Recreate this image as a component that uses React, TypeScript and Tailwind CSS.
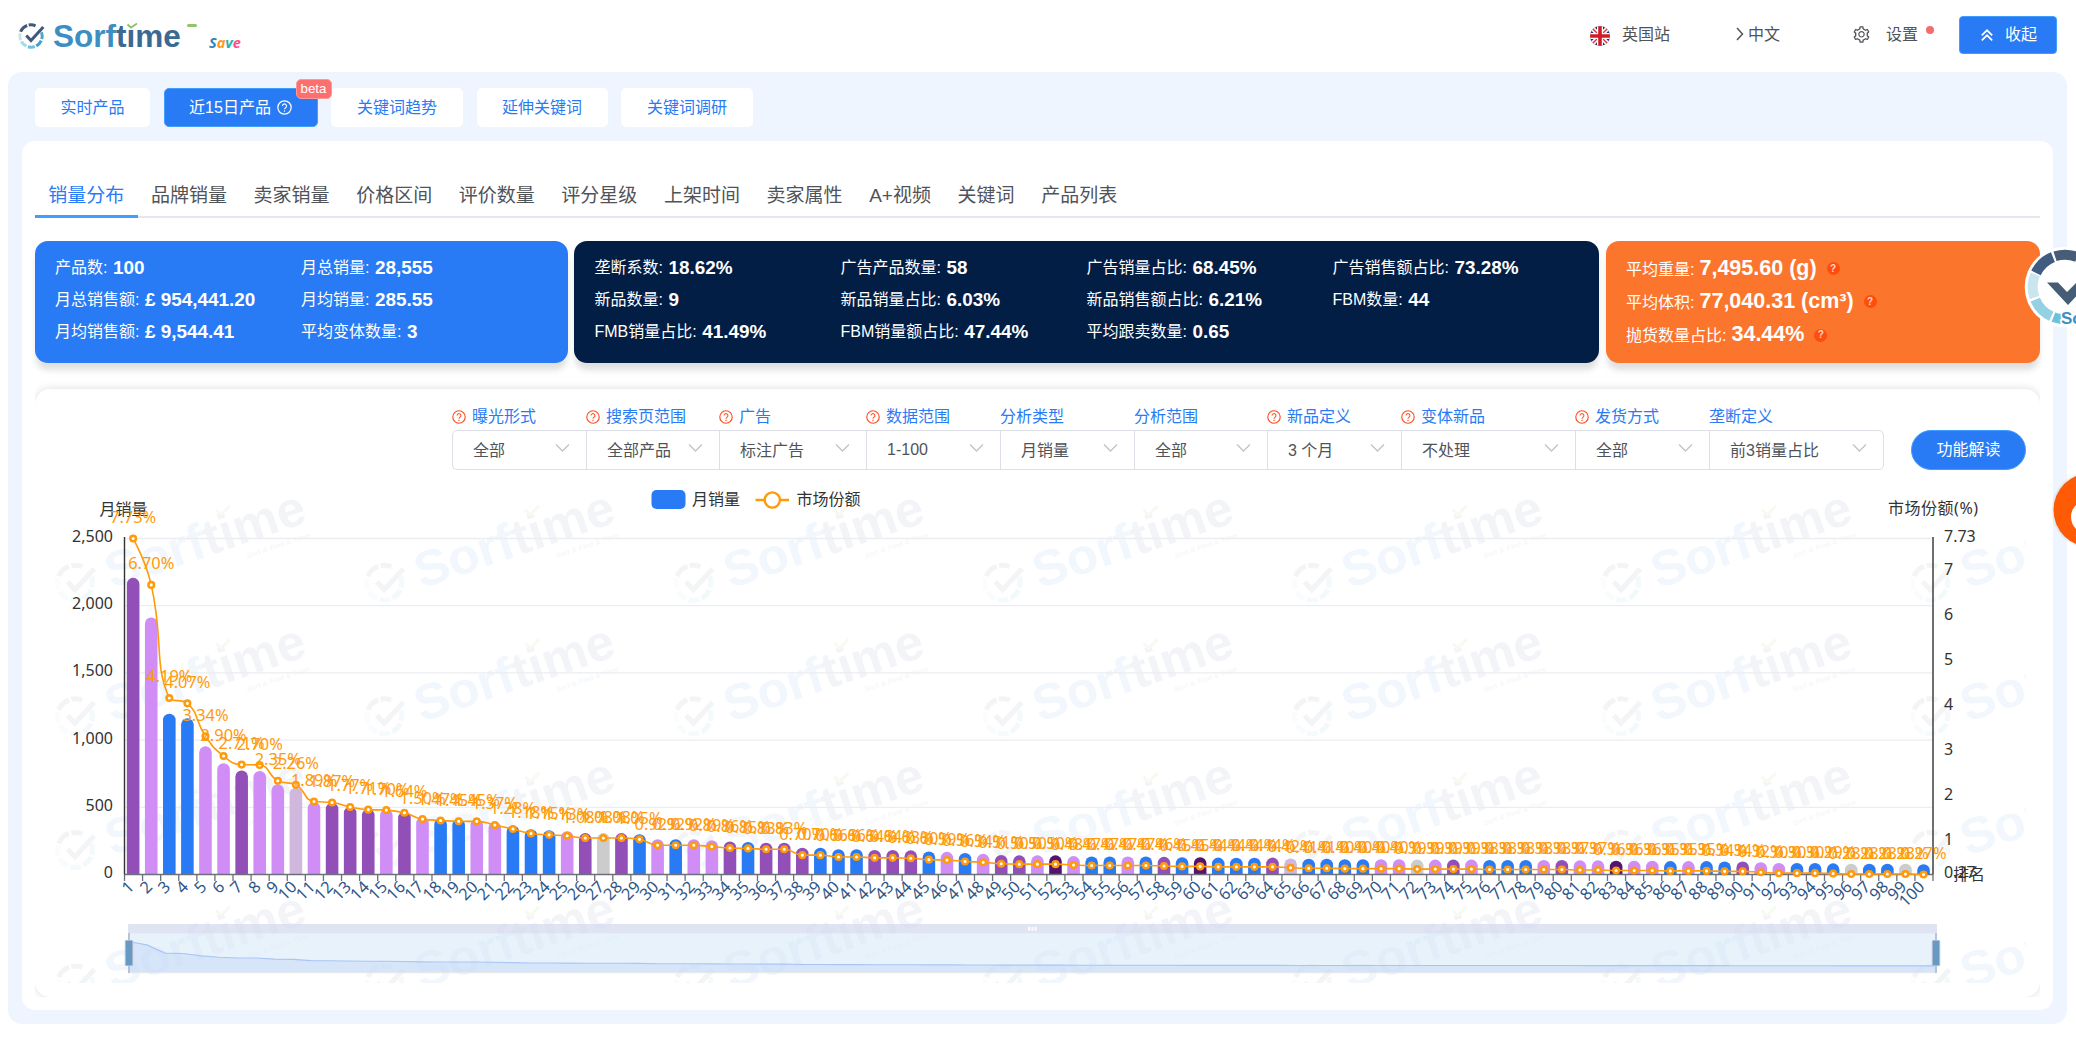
import React from "react";
import { AiOutlineSetting } from "react-icons/ai";

const pct = [
  7.73, 6.7, 4.19, 4.07, 3.34, 2.9, 2.71, 2.7, 2.35, 2.26, 1.89, 1.87, 1.77, 1.71, 1.7, 1.64, 1.5, 1.47, 1.45, 1.45,
  1.37, 1.28, 1.18, 1.15, 1.13, 1.08, 1.08, 1.08, 1.05, 0.92, 0.92, 0.92, 0.89, 0.86, 0.85, 0.83, 0.83, 0.7, 0.7, 0.66,
  0.66, 0.64, 0.64, 0.63, 0.6, 0.59, 0.56, 0.54, 0.51, 0.5, 0.5, 0.5, 0.48, 0.47, 0.47, 0.47, 0.47, 0.46, 0.45, 0.45,
  0.44, 0.44, 0.44, 0.44, 0.42, 0.41, 0.41, 0.4, 0.4, 0.4, 0.4, 0.39, 0.39, 0.39, 0.39, 0.38, 0.38, 0.38, 0.38, 0.38,
  0.37, 0.37, 0.36, 0.36, 0.36, 0.35, 0.35, 0.35, 0.34, 0.34, 0.32, 0.3, 0.3, 0.3, 0.29, 0.28, 0.28, 0.28, 0.28, 0.27,
];
const kinds =
  "PLBBLLPLLMLPPPLPLBBLLBBBLPGPBLBLLPBPPPBBBPPPBLBLPPLDLBBLBPBDBBBPMBBBBLLGLPLBBBLPLLDLLBLBBPLLBBBGBBGB";
const barColor: Record<string, string> = {
  P: "#924fb8",
  L: "#cf8df5",
  B: "#287bf5",
  G: "#cccccc",
  D: "#551370",
  M: "#cfb7de",
};

const X0 = 124.5;
const X1 = 1933;
const TOP = 538.5;
const BASE = 874.5;
const band = (X1 - X0) / 100;
const cx = (i: number) => X0 - 0.4 + band * (i + 0.5);
const shareY = (v: number) => BASE - ((v - 0.27) / 7.46) * (BASE - TOP);
const salesY = (v: number) => BASE - (v / 2500) * (BASE - TOP);

type Pt = [number, number];

function smoothPath(pts: Pt[], smooth: number) {
  const clamp = (v: number, a: number, b: number) => Math.max(Math.min(v, Math.max(a, b)), Math.min(a, b));
  let d = `M${pts[0][0]},${pts[0][1]}`;
  let c0: Pt = pts[0];
  for (let i = 1; i < pts.length; i++) {
    const p = pts[i];
    const prev = pts[i - 1];
    const next = pts[i + 1];
    let c1: Pt = p;
    let nextC0: Pt = p;
    if (next) {
      const lp = Math.hypot(p[0] - prev[0], p[1] - prev[1]);
      const ln = Math.hypot(next[0] - p[0], next[1] - p[1]);
      const ratio = ln / (ln + lp);
      const calc = (k: 0 | 1) => {
        const v = next[k] - prev[k];
        let n = clamp(p[k] + v * smooth * ratio, next[k], p[k]);
        const c = clamp(p[k] - ((n - p[k]) * lp) / ln, prev[k], p[k]);
        n = p[k] + ((p[k] - c) * ln) / lp;
        return [c, n];
      };
      const ax = calc(0);
      const ay = calc(1);
      c1 = [ax[0], ay[0]];
      nextC0 = [ax[1], ay[1]];
    }
    d += `C${c0[0].toFixed(2)},${c0[1].toFixed(2)} ${c1[0].toFixed(2)},${c1[1].toFixed(2)} ${p[0].toFixed(2)},${p[1].toFixed(2)}`;
    c0 = nextC0;
  }
  return d;
}

function arc(x: number, y: number, r: number, a: number, b: number) {
  const q = (t: number) => `${x + r * Math.cos((t * Math.PI) / 180)},${y + r * Math.sin((t * Math.PI) / 180)}`;
  return `M${q(a)} A${r},${r} 0 0 1 ${q(b)}`;
}

const ringSegments: [number, number, string][] = [
  [-20, 16, "#4fa6cc"],
  [24, 62, "#3ea0cc"],
  [70, 106, "#6cc3da"],
  [114, 150, "#a2dbe8"],
  [158, 194, "#c4e5ee"],
  [202, 250, "#46587a"],
  [258, 294, "#46587a"],
];

function RingMark({ x, y, r, w }: { x: number; y: number; r: number; w: number }) {
  return (
    <g fill="none">
      {ringSegments.map(([a, b, c]) => (
        <path key={a} d={arc(x, y, r, a, b)} stroke={c} strokeWidth={w} />
      ))}
      <path
        d={`M${x - r * 0.42},${y - r * 0.05} L${x},${y + r * 0.4} L${x + r * 1.1},${y - r * 0.8}`}
        stroke="#43577a"
        strokeWidth={w}
      />
    </g>
  );
}

function Watermark({ x, y }: { x: number; y: number }) {
  return (
    <g>
      <g opacity="0.06">
        <RingMark x={x} y={y} r={17.5} w={5} />
      </g>
      <g transform={`translate(${x + 37} ${y + 6}) rotate(-18.8)`} fontFamily="'Liberation Sans', sans-serif">
        <text fontSize="50" fontWeight="700" textLength="208" lengthAdjust="spacingAndGlyphs">
          <tspan fill="#f1f7fc">Sorf</tspan>
          <tspan fill="#f2f4f8">time</tspan>
        </text>
        <text x="138" y="15" fontSize="7" fontStyle="italic" fill="#f2f5f8" textLength="66">
          Sort &amp; Find &amp; Time
        </text>
      </g>
      <path d={`M${x + 141},${y - 73} l5,5 l9,-9`} fill="none" stroke="#f7faf0" strokeWidth="3" />
    </g>
  );
}

function Chart() {
  const line = smoothPath(
    pct.map((v, i) => [cx(i), shareY(v)] as Pt),
    0.5,
  );
  const sx = (i: number) => 128.5 + i * 18.25;
  const mini = pct.map((v, i) => `${sx(i).toFixed(1)},${(966.8 - 3.27 * v).toFixed(2)}`).join(" ");
  const axisText = "'Noto Sans', 'Noto Sans CJK SC', sans-serif";
  return (
    <svg className="block h-[520px] w-[2005px]" viewBox="35 477 2005 520" fontFamily={axisText} fontSize="16">
      <clipPath id="wm">
        <rect x="49" y="477" width="1977" height="506" />
      </clipPath>
      <g clipPath="url(#wm)">
        {[0, 1, 2, 3].map((r) =>
          [0, 1, 2, 3, 4, 5, 6].map((c) => <Watermark key={`${r}-${c}`} x={75 + c * 309.2} y={582.7 + r * 133.6} />),
        )}
      </g>

      <rect x="651.5" y="490" width="34" height="19" rx="5" fill="#287bf5" />
      <text x="692" y="504.5" fill="#333">月销量</text>
      <path d="M755.5 500H789" stroke="#ff9a0b" strokeWidth="2.4" />
      <circle cx="772.3" cy="500" r="7.6" fill="#fff" stroke="#ff9a0b" strokeWidth="2.4" />
      <text x="796.5" y="504.5" fill="#333">市场份额</text>

      <text x="99.5" y="514.5" fill="#333">月销量</text>
      <text x="1888" y="514" fill="#333" textLength="90">市场份额(%)</text>
      {[0, 500, 1000, 1500, 2000, 2500].map((v) => (
        <g key={v}>
          {v > 0 && <path d={`M${X0} ${salesY(v)}H${X1}`} stroke="#ebedf1" strokeWidth="1.3" />}
          <text x="113" y={salesY(v) + 3.5} textAnchor="end" fill="#333">
            {v.toLocaleString("en-US")}
          </text>
        </g>
      ))}
      {[0.27, 1, 2, 3, 4, 5, 6, 7, 7.73].map((v) => (
        <text key={v} x="1944" y={shareY(v) + 3.5} fill="#333">
          {v}
        </text>
      ))}
      <text x="1953" y="879.5" fill="#333">排名</text>

      {pct.map((v, i) => {
        const top = salesY(v * 285.55);
        const l = cx(i) - 6.3;
        const r = cx(i) + 6.3;
        const k = Math.min(6.3, BASE - top);
        return (
          <path
            key={i}
            d={`M${l} ${BASE}V${top + k}A6.3 ${k} 0 0 1 ${r} ${top + k}V${BASE}Z`}
            fill={barColor[kinds[i]]}
          />
        );
      })}

      <path d={`M${X0} ${BASE}H${X1}`} stroke="#6e7079" strokeWidth="1.3" />
      {Array.from({ length: 101 }, (_, i) => (
        <path key={i} d={`M${X0 + band * i} ${BASE}v6.5`} stroke="#6e7079" strokeWidth="1.3" />
      ))}
      <path d={`M${X0} 537V${BASE}M${X1} 537V${BASE}`} stroke="#333" strokeWidth="1.4" />
      {pct.map((_, i) => (
        <text key={i} transform={`translate(${cx(i) + 2} 888) rotate(-45)`} textAnchor="end" fontSize="16.3" fill="#2f5788">
          {i + 1}
        </text>
      ))}

      <path d={line} fill="none" stroke="#ff9a0b" strokeWidth="1.6" />
      {pct.map((v, i) => (
        <circle key={i} cx={cx(i)} cy={shareY(v)} r="2.8" fill="#fff" stroke="#ff9a0b" strokeWidth="2.5" />
      ))}
      {pct.map((v, i) => (
        <text key={i} x={cx(i)} y={shareY(v) - 15.5} textAnchor="middle" fontSize="16.4" fill="#ff9a0b">
          {v.toFixed(2)}%
        </text>
      ))}

      <rect x="128" y="924" width="1809" height="9.5" rx="1" fill="#d2d8ed" fillOpacity="0.72" />
      <rect x="128" y="933.5" width="1809" height="39" fill="#d2e6f7" fillOpacity="0.5" />
      <polygon points={`128.5,972 ${mini} 1936,972`} fill="#b7cff5" fillOpacity="0.35" />
      <polyline points={mini} fill="none" stroke="#a9c5f5" strokeWidth="1.1" />
      <path d="M128 972.7H1937" stroke="#e2e5ea" strokeWidth="1" />
      {[1028, 1031.3, 1034.6].map((x) => (
        <rect key={x} x={x} y="926.8" width="2.2" height="4" fill="#fff" fillOpacity="0.85" />
      ))}
      {[129, 1936].map((x) => (
        <g key={x}>
          <path d={`M${x} 933V973`} stroke="#acb8d1" strokeWidth="1.6" />
          <rect x={x - 3.6} y="940.5" width="7.2" height="25" rx="1" fill="#6699c4" stroke="#acb8d1" strokeWidth="1.2" />
        </g>
      ))}
    </svg>
  );
}

function HelpCircle({ className, size }: { className?: string; size: number }) {
  return (
    <svg className={className} width={size} height={size} viewBox="0 0 16 16" fill="none" stroke="currentColor">
      <circle cx="8" cy="8" r="7.1" strokeWidth="1.3" />
      <path d="M5.8 6.4a2.2 2.2 0 1 1 3.4 1.8c-.8.5-1.2.8-1.2 1.7" strokeWidth="1.2" />
      <circle cx="8" cy="11.8" r=".5" fill="currentColor" strokeWidth=".6" />
    </svg>
  );
}

function Stat({ label, value }: { label: string; value: string }) {
  return (
    <div className="flex h-8 items-center whitespace-nowrap">
      <span className="text-base">{label}:</span>
      <span className="ml-[5.5px] text-[18.9px] font-bold">{value}</span>
    </div>
  );
}

const blueStats = [
  ["产品数", "100"],
  ["月总销量", "28,555"],
  ["月总销售额", "£ 954,441.20"],
  ["月均销量", "285.55"],
  ["月均销售额", "£ 9,544.41"],
  ["平均变体数量", "3"],
];
const navyStats = [
  ["垄断系数", "18.62%"],
  ["广告产品数量", "58"],
  ["广告销量占比", "68.45%"],
  ["广告销售额占比", "73.28%"],
  ["新品数量", "9"],
  ["新品销量占比", "6.03%"],
  ["新品销售额占比", "6.21%"],
  ["FBM数量", "44"],
  ["FMB销量占比", "41.49%"],
  ["FBM销量额占比", "47.44%"],
  ["平均跟卖数量", "0.65"],
];
const orangeStats = [
  ["平均重量", "7,495.60 (g)"],
  ["平均体积", "77,040.31 (cm³)"],
  ["抛货数量占比", "34.44%"],
];
const filters: [string, string, boolean, string][] = [
  ["曝光形式", "全部", true, "w-[134px]"],
  ["搜索页范围", "全部产品", true, "w-[133px]"],
  ["广告", "标注广告", true, "w-[147px]"],
  ["数据范围", "1-100", true, "w-[134px]"],
  ["分析类型", "月销量", false, "w-[134px]"],
  ["分析范围", "全部", false, "w-[133px]"],
  ["新品定义", "3 个月", true, "w-[134px]"],
  ["变体新品", "不处理", true, "w-[174px]"],
  ["发货方式", "全部", true, "w-[134px]"],
  ["垄断定义", "前3销量占比", false, "w-[175px]"],
];
const navItems = [
  "销量分布",
  "品牌销量",
  "卖家销量",
  "价格区间",
  "评价数量",
  "评分星级",
  "上架时间",
  "卖家属性",
  "A+视频",
  "关键词",
  "产品列表",
];

function Header() {
  return (
    <header className="flex h-[72px] items-start justify-between">
      <div className="flex pl-[17px]">
        <svg className="mt-[22px] h-7 w-7" viewBox="0 0 28 28">
          <RingMark x={14} y={14} r={11.2} w={3} />
        </svg>
        <div className="relative ml-2 mt-[18px] w-[127px] text-[31.5px] leading-9 font-bold">
          <span className="text-[#3d8fc2]">Sorf</span>
          <span className="text-[#3a6a94]">time</span>
          <svg className="absolute top-[4px] left-[73px] h-[8px] w-[12px]" viewBox="0 0 12 8">
            <rect x="1.5" width="8" height="8" fill="#fff" />
            <path d="M1.5 2.5l3.5 3 6-4" fill="none" stroke="#8fc063" strokeWidth="1.8" />
          </svg>
        </div>
        <span className="mt-[23.5px] ml-[7px] h-[3px] w-[10px] rounded-sm bg-[#92c46a]" />
        <div
          className="mt-[33px] ml-[12px] text-[14.5px] leading-[19px] font-bold italic"
          style={{ fontFamily: "'Open Sans', 'Noto Sans', sans-serif" }}
        >
          <span className="text-[#2f83bd]">S</span>
          <span className="text-[#ff9a1c]">a</span>
          <span className="text-[#1fb5ad]">v</span>
          <span className="text-[#ff4f86]">e</span>
        </div>
      </div>
      <div className="flex h-[70px] items-center pr-[19px] text-base text-[#505357]">
        <svg className="mt-0.5 mr-3 h-5 w-5" viewBox="0 0 20 20">
          <clipPath id="flag">
            <circle cx="10" cy="10" r="10" />
          </clipPath>
          <g clipPath="url(#flag)">
            <rect width="20" height="20" fill="#26346e" />
            <path d="M0 0L20 20M20 0L0 20" stroke="#fff" strokeWidth="4.6" />
            <path d="M0 0L20 20M20 0L0 20" stroke="#d9303f" strokeWidth="1.4" />
            <path d="M10 0V20M0 10H20" stroke="#fff" strokeWidth="6" />
            <path d="M10 0V20M0 10H20" stroke="#d31a27" strokeWidth="3.6" />
          </g>
        </svg>
        <span>英国站</span>
        <svg className="mr-1 mb-[3px] ml-[66px] h-[14px] w-[8px]" viewBox="0 0 8 14" fill="none">
          <path d="M1 1l5.5 6L1 13" stroke="currentColor" strokeWidth="1.5" />
        </svg>
        <span>中文</span>
        <AiOutlineSetting className="mb-[2px] ml-[72px] h-[19px] w-[19px]" />
        <span className="ml-[15px]">设置</span>
        <span className="mb-[11px] ml-2 h-2 w-2 rounded-full bg-[#f56c6c]" />
        <button className="ml-[25px] flex h-[38px] w-[98px] items-center rounded-[4px] border border-[#409eff] bg-[#287bf5] pl-[21px] text-white">
          <svg className="mr-[12px] h-[12px] w-[12px]" viewBox="0 0 12 12" fill="none" stroke="#fff" strokeWidth="1.7">
            <path d="M.8 6.4L6 1.3l5.2 5.1M.8 11.4L6 6.3l5.2 5.1" />
          </svg>
          收起
        </button>
      </div>
    </header>
  );
}

function MainTabs() {
  const tab = "flex h-[39px] items-center justify-center rounded-[5px] bg-white text-base text-[#287bf5]";
  return (
    <div className="flex gap-[13.5px] pt-4 pl-[27px]">
      <div className={`${tab} w-[115px]`}>实时产品</div>
      <div className="relative flex h-[39px] w-[154px] items-center justify-center rounded-[5px] border border-[#409eff] bg-[#287bf5] text-base text-white">
        近15日产品
        <HelpCircle className="ml-1.5" size={15} />
        <span className="absolute -top-[10px] -right-[15px] flex h-5 w-9 items-center justify-center rounded-[5px] border border-[#f99] bg-[#fc6f6f] text-[13.3px]">
          beta
        </span>
      </div>
      <div className={`${tab} w-[132px]`}>关键词趋势</div>
      <div className={`${tab} w-[131px]`}>延伸关键词</div>
      <div className={`${tab} w-[132px]`}>关键词调研</div>
    </div>
  );
}

function SubNav() {
  return (
    <nav className="flex h-[77px] items-end border-b-2 border-[#e4e7ed] text-[19px] text-[#505357]">
      {navItems.map((t, i) => (
        <div
          key={t}
          className={
            i === 0
              ? "-mb-[2px] flex h-[46px] items-start border-b-[3px] border-[#409eff] px-[13.3px] text-[#287bf5]"
              : "-mb-[2px] flex h-[46px] items-start px-[13.3px]"
          }
        >
          <span className="leading-[48px]">{t}</span>
        </div>
      ))}
    </nav>
  );
}

function Cards() {
  const shadow = "shadow-[0_8px_6px_-1px_rgba(0,0,0,0.13)]";
  return (
    <div className="mt-[23px] flex h-[122px] text-white">
      <div className={`w-[533px] rounded-[13px] bg-[#287bf5] pt-[11px] pl-5 ${shadow}`}>
        <div className="grid grid-cols-[246px_246px]">
          {blueStats.map(([l, v]) => (
            <Stat key={l} label={l} value={v} />
          ))}
        </div>
      </div>
      <div className={`ml-[6px] w-[1025px] rounded-[13px] bg-[#021e45] pt-[11px] pl-[20.5px] ${shadow}`}>
        <div className="grid grid-cols-[246px_246px_246px_246px]">
          {navyStats.map(([l, v]) => (
            <Stat key={l} label={l} value={v} />
          ))}
        </div>
      </div>
      <div className={`ml-[7px] w-[434px] rounded-[13px] bg-[#fb752c] pt-[10px] pl-5 ${shadow}`}>
        {orangeStats.map(([l, v]) => (
          <div key={l} className="flex h-[33.3px] items-center whitespace-nowrap">
            <span className="mt-1 text-base">{l}:</span>
            <span className="ml-[5px] text-[21.5px] font-bold">{v}</span>
            <span className="mt-0.5 ml-[10px] flex h-[13px] w-[13px] items-center justify-center rounded-full bg-[#ff4d0d] text-[10px] leading-none font-bold text-[#ffd9c8]">
              ?
            </span>
          </div>
        ))}
      </div>
    </div>
  );
}

function Filters() {
  return (
    <div className="flex h-[88px] items-start pt-[14px] pl-[417px]">
      <div className="flex">
        {filters.map(([label, value, help, w], i) => (
          <div key={label} className={w}>
            <div className="flex h-[27px] items-center text-base leading-5 text-[#287bf5]">
              {help && <HelpCircle className="mr-1.5 text-[#ff4d1f]" size={14} />}
              <span>{label}</span>
            </div>
            <div
              className={`flex h-[40px] items-center justify-between border-y border-l border-[#dcdfe6] pr-[16px] pl-5 text-base text-[#505357] ${
                i === 0 ? "rounded-l-[5px]" : ""
              } ${i === filters.length - 1 ? "rounded-r-[5px] border-r" : ""}`}
            >
              <span className={i === 3 ? "" : "mt-0.5"}>{value}</span>
              <svg className="mb-1 h-2 w-[15px]" viewBox="0 0 15 8" fill="none" stroke="#c0c4cc" strokeWidth="1.4">
                <path d="M1 0.5l6.5 6.5L14 0.5" />
              </svg>
            </div>
          </div>
        ))}
      </div>
      <button className="mt-[27px] ml-[27px] h-10 w-[115px] rounded-full border border-[#409eff] bg-[#287bf5] text-base text-white">
        功能解读
      </button>
    </div>
  );
}

function FloatingWidgets() {
  return (
    <>
      <svg className="absolute top-[246px] right-0 h-[82px] w-[52px]" viewBox="2024 247 52 82" fill="none">
        <circle cx="2065" cy="288" r="40.3" fill="#fff" />
        <path d={arc(2065, 288, 32.3, -108, -68)} stroke="#475d77" strokeWidth="10" />
        <path d={arc(2065, 288, 32.3, -154, -112)} stroke="#3f5c80" strokeWidth="10.5" />
        <path d={arc(2065, 288, 32.3, 161, 203)} stroke="#c9e6ee" strokeWidth="10" />
        <path d={arc(2065, 288, 32.3, 115, 157)} stroke="#94d1e5" strokeWidth="10" />
        <path d={arc(2065, 288, 32.3, 97, 111)} stroke="#6bc3d9" strokeWidth="10" />
        <path d="M2047 283.5h11l9 9.5 15-15v13l-14 15z" fill="#445d75" />
        <text
          x="2061"
          y="325"
          fontSize="17"
          fontWeight="700"
          fill="#3d8fc2"
          stroke="#fff"
          strokeWidth="3"
          paintOrder="stroke"
          fontFamily="'Liberation Sans', sans-serif"
        >
          So
        </text>
      </svg>
      <svg className="absolute top-[468px] right-0 h-[84px] w-[28px]" viewBox="2048 468 28 84">
        <circle cx="2090.5" cy="510" r="39" fill="#000" opacity="0.05" />
        <circle cx="2090.5" cy="510" r="37" fill="#ff5a05" />
        <circle cx="2088" cy="517" r="17" fill="#fff" />
      </svg>
    </>
  );
}

export default function App() {
  return (
    <div
      className="relative h-[1057px] w-[2076px] overflow-hidden bg-white"
      style={{ fontFamily: "'Liberation Sans', 'Noto Sans CJK SC', sans-serif" }}
    >
      <Header />
      <main className="ml-2 h-[952px] w-[2059px] rounded-[14px] bg-[#eef5ff]">
        <MainTabs />
        <section className="mt-[14px] ml-[14px] h-[869px] w-[2031px] rounded-[13px] bg-white px-[13px]">
          <SubNav />
          <Cards />
          <div className="mt-[16px] overflow-hidden pt-[10px]">
            <div className="h-[608px] rounded-[15px] bg-white shadow-[0_0_9px_rgba(0,0,0,0.14)]">
              <Filters />
              <Chart />
            </div>
          </div>
        </section>
      </main>
      <FloatingWidgets />
    </div>
  );
}
